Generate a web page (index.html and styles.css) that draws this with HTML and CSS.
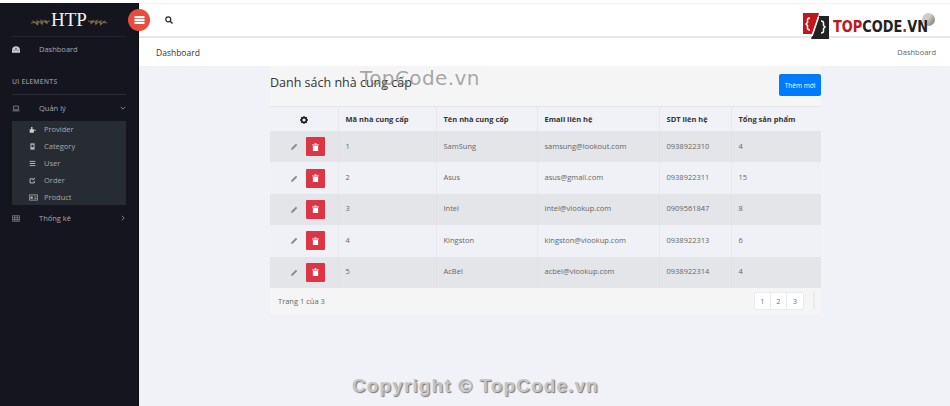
FILE: index.html
```html
<!DOCTYPE html>
<html lang="vi">
<head>
    <meta charset="UTF-8">
    <title>Danh sách nhà cung cấp</title>
    <link rel="stylesheet" href="styles.css">
</head>
<body>
    <div class="wrapper">
        <!-- Sidebar -->
        <aside class="sidebar">
            <div class="brand">
                <svg class="laurel" viewBox="0 0 20 8"><path d="M0 5c6-1 13-1 20-2" stroke="#8a7350" fill="none"/><path d="M3 5L1 2l4 2zM7 4.500L5 1.500l4 2zM11 4L9 1l4 2zM15 3.500L13 1l4 2zM4 5l3 3 1-3zM9 4.500l3 3 1-3.500zM14 4l3 2.500L18 3.500z" fill="#7d6a4a"/></svg>
                <span class="brand-name">HTP</span>
                <svg class="laurel" viewBox="0 0 20 8"><path d="M20 5C14 4 7 4 0 3" stroke="#8a7350" fill="none"/><path d="M17 5l2-3-4 2zM13 4.500l2-3-4 2zM9 4l2-3-4 2zM5 3.500L7 1 3 3zM16 5l-3 3-1-3zM11 4.500l-3 3-1-3.500zM6 4L3 6.500 2 3.500z" fill="#7d6a4a"/></svg>
            </div>
            <a class="nav-item nav-first">
                <svg class="nav-icon" viewBox="0 0 10 8"><path d="M0 8V5C0 2 2 0 5 0s5 2 5 5v3z" fill="#c9ccd1"/><path d="M5 2v3M2 5h1M7 5h1" stroke="#14151f" stroke-width="1"/></svg>
                <span>Dashboard</span>
            </a>
            <div class="nav-label">UI ELEMENTS</div>
            <a class="nav-item nav-open">
                <svg class="nav-icon" viewBox="0 0 10 8"><path d="M2 1h6v4.500H2zM.5 7h9" stroke="#8d9096" fill="none"/></svg>
                <span>Quản lý</span>
                <svg class="nav-arrow" viewBox="0 0 8 8"><path d="M1 2.500l3 3 3-3" stroke="#8d9096" stroke-width="1.200" fill="none"/></svg>
            </a>
            <div class="submenu">
                <a class="sub-item">
                    <svg class="sub-icon" viewBox="0 0 10 9"><path d="M1 9V4h2V1h2v3h2v1h3v1H7v3z" fill="#c9ccd1"/></svg>
                    Provider
                </a>
                <a class="sub-item">
                    <svg class="sub-icon" viewBox="0 0 10 9"><path d="M2 0h6v9H2z" fill="#b4b7bc"/><path d="M3.500 5.500h3V2h-3z" fill="#2a2f36"/></svg>
                    Category
                </a>
                <a class="sub-item">
                    <svg class="sub-icon" viewBox="0 0 10 9"><path d="M1 1.500h8M1 4.500h8M1 7.500h8" stroke="#c9ccd1" stroke-width="1.200"/></svg>
                    User
                </a>
                <a class="sub-item">
                    <svg class="sub-icon" viewBox="0 0 10 9"><path d="M1.500 2h5M1.500 2v6h6V5M5 4l4-3" stroke="#c9ccd1" stroke-width="1.200" fill="none"/></svg>
                    Order
                </a>
                <a class="sub-item">
                    <svg class="sub-icon sub-icon-wide" viewBox="0 0 12 9"><path d="M.5 1h11v7H.5z" stroke="#b4b7bc" fill="none"/><path d="M2 3h3v3H2zM7 3h3v1H7zM7 5h3v1H7z" fill="#b4b7bc"/></svg>
                    Product
                </a>
            </div>
            <a class="nav-item">
                <svg class="nav-icon" viewBox="0 0 10 8"><path d="M.5.500h9v7h-9zM.5 3h9M.5 5.300h9M3.500.500v7M6.500.500v7" stroke="#8d9096" stroke-width=".8" fill="none"/></svg>
                <span>Thống kê</span>
                <svg class="nav-arrow" viewBox="0 0 8 8"><path d="M2.500 1l3 3-3 3" stroke="#8d9096" stroke-width="1.200" fill="none"/></svg>
            </a>
        </aside>

        <div class="main">
            <!-- Thanh trên cùng -->
            <header class="topbar">
                <button class="toggle-btn">
                    <svg viewBox="0 0 10 8" width="11" height="8"><path d="M0 0h10v2.300H0zM0 2.900h10v2.200H0zM0 5.700h10V8H0z" fill="#fff"/></svg>
                </button>
                <svg class="search-icon" viewBox="0 0 8 8"><circle cx="3.300" cy="3.300" r="2.500" stroke="#222" stroke-width="1.200" fill="none"/><path d="M5.200 5.200L7.500 7.500" stroke="#222" stroke-width="1.300"/></svg>
                <div class="logo">
                    <svg class="logo-mark" viewBox="0 0 26 26">
                        <path d="M0 0h16l-6 21H0z" fill="#c0171d"/>
                        <path d="M16 3h10v23H8z" fill="#222"/>
                        <path d="M15.500 4L9 23" stroke="#fff" stroke-width="1.600"/>
                        <path d="M7 5Q4.500 5 4.500 7v2.500L3 11l1.500 1.500V15q0 2 2.500 2" stroke="#fff" stroke-width="1.500" fill="none"/>
                        <path d="M18 8q2.500 0 2.500 2v2.500L22 14l-1.500 1.500V18q0 2-2.500 2" stroke="#fff" stroke-width="1.500" fill="none"/>
                    </svg>
                    <span class="avatar"></span>
                    <span class="logo-text"><span class="logo-red">TOP</span>CODE<span class="logo-red">.</span>VN</span>
                </div>
            </header>

            <div class="breadcrumb-bar">
                <span class="page-name">Dashboard</span>
                <span class="crumb">Dashboard</span>
            </div>

            <div class="content">
                <div class="card">
                    <div class="card-header">
                        <h1>Danh sách nhà cung cấp</h1>
                        <button class="add-btn">Thêm mới</button>
                    </div>
                    <table class="data-table">
                        <thead>
                            <tr>
                                <th class="col-action">
                                    <svg class="gear" viewBox="0 0 10 10"><circle cx="5" cy="5" r="3" stroke="#222" stroke-width="2" fill="none"/><path d="M5 0v2M5 8v2M0 5h2M8 5h2M1.500 1.500l1.500 1.500M7 7l1.500 1.500M8.500 1.500L7 3M3 7L1.500 8.500" stroke="#222" stroke-width="1.600"/></svg>
                                </th>
                                <th class="col-code">Mã nhà cung cấp</th>
                                <th class="col-name">Tên nhà cung cấp</th>
                                <th class="col-mail">Email liên hệ</th>
                                <th class="col-phone">SDT liên hệ</th>
                                <th>Tổng sản phẩm</th>
                            </tr>
                        </thead>
                        <tbody id="rows"></tbody>
                    </table>
                    <div class="card-footer">
                        <span>Trang 1 của 3</span>
                        <div class="pager-wrap">
                            <div class="pager">
                                <a>1</a>
                                <a>2</a>
                                <a>3</a>
                            </div>
                            <span class="pager-end"></span>
                        </div>
                    </div>
                </div>
            </div>
        </div>
    </div>

    <!-- Chữ đóng dấu phủ lên trang -->
    <div class="mark-top">TopCode.vn</div>
    <div class="mark-bottom">Copyright © TopCode.vn</div>

    <script>
        var suppliers = [
            [1, 'SamSung', 'samsung@lookout.com', '0938922310', 4],
            [2, 'Asus', 'asus@gmail.com', '0938922311', 15],
            [3, 'Intel', 'intel@vlookup.com', '0909561847', 8],
            [4, 'Kingston', 'kingston@vlookup.com', '0938922313', 6],
            [5, 'AcBel', 'acbel@vlookup.com', '0938922314', 4]
        ];
        var actions = '<td class="col-action"><div class="actions">' +
            '<svg class="pencil" viewBox="0 0 8 8"><path d="M0 8l.6-2.200L5.600.8l1.600 1.600-5 5z" fill="#8a8a8a"/></svg>' +
            '<button class="del-btn"><svg viewBox="0 0 8 9" width="7" height="8"><path d="M0 1.500h8v1H0zM3 .3h2v1H3zM1 3h6v6H1z" fill="#fff"/></svg></button>' +
            '</div></td>';
        document.getElementById('rows').innerHTML = suppliers.map(function (s) {
            return '<tr>' + actions + s.map(function (v) { return '<td>' + v + '</td>'; }).join('') + '</tr>';
        }).join('');
    </script>
</body>
</html>
```

FILE: styles.css
```css
* {
    box-sizing: border-box;
}
body {
    margin: 0;
    height: 406px;
    overflow: hidden;
    font-family: "Open Sans", Arial, sans-serif;
    font-size: 7.5px;
    color: #666;
    background-color: #fff;
}
a {
    color: inherit;
}
.wrapper {
    display: flex;
    height: 100%;
    padding-top: 3px;
}

/* Sidebar */
.sidebar {
    width: 139px;
    flex-shrink: 0;
    background-color: #14151f;
    border-right: 1px solid #0b0b10;
    color: #a5a8ad;
    padding: 0 12px;
}
.brand {
    height: 34px;
    display: flex;
    align-items: center;
    justify-content: center;
    gap: 1px;
    border-bottom: 1px solid #24252e;
}
.brand-name {
    font-family: "Liberation Serif", serif;
    font-size: 19px;
    color: #f2f2f2;
}
.laurel {
    width: 19px;
    height: 8px;
    margin-top: 4px;
}
.nav-item {
    display: flex;
    align-items: center;
    height: 24px;
}
.nav-item span {
    margin-left: 19px;
}
.nav-icon {
    width: 8px;
    height: 7px;
    flex-shrink: 0;
}
.nav-arrow {
    width: 6px;
    height: 6px;
    margin-left: auto;
}
.nav-label {
    margin-top: 16px;
    padding-bottom: 7px;
    font-size: 6.800px;
    font-weight: 600;
    letter-spacing: .2px;
    color: #8d9096;
    border-bottom: 1px solid #2b2c35;
    line-height: 10px;
}
.nav-open {
    height: 26px;
}
.submenu {
    background-color: #272c33;
    padding: 0 0 0 17px;
    margin-bottom: 1px;
}
.sub-item {
    display: flex;
    align-items: center;
    height: 16.900px;
}
.sub-icon {
    width: 7px;
    height: 7px;
    margin-right: 8px;
}
.sub-icon-wide {
    width: 9px;
    margin-right: 6px;
}

/* Thanh trên cùng */
.main {
    flex: 1;
    min-width: 0;
    display: flex;
    flex-direction: column;
    background-color: #f0f2f8;
}
.topbar {
    height: 35px;
    background: #fff;
    border-top: 1px solid #f0f1f4;
    border-bottom: 2px solid #e6e7ec;
    display: flex;
    align-items: center;
    position: relative;
    padding-left: 26px;
}
.toggle-btn {
    position: absolute;
    left: -11px;
    top: 5px;
    width: 22px;
    height: 22px;
    border-radius: 50%;
    border: none;
    padding: 0;
    background-color: #e74c3c;
    display: flex;
    align-items: center;
    justify-content: center;
}
.search-icon {
    width: 8px;
    height: 8px;
}
.logo {
    margin-left: auto;
    margin-right: 23px;
    display: flex;
    align-items: center;
    position: relative;
    align-self: flex-start;
    margin-top: 9px;
}
.logo-mark {
    width: 26px;
    height: 26px;
}
.logo-text {
    display: inline-block;
    width: 94px;
    white-space: nowrap;
    font-family: "DejaVu Sans Condensed", "DejaVu Sans", sans-serif;
    font-weight: bold;
    font-size: 16.500px;
    color: #222;
    margin-left: 4px;
    position: relative;
    transform: scaleX(.87);
    transform-origin: left center;
}
.logo-red {
    color: #c0171d;
}
.avatar {
    width: 13px;
    height: 13px;
    border-radius: 50%;
    background: linear-gradient(125deg, #cfccc5 45%, #6f6a64);
    position: absolute;
    right: -8px;
    top: 0;
}
.breadcrumb-bar {
    height: 28px;
    background: #fff;
    display: flex;
    align-items: center;
    justify-content: space-between;
    padding: 0 14px 0 17px;
}
.page-name {
    font-size: 8.500px;
    color: #333;
}
.crumb {
    color: #666;
}

/* Conteúdo */
.content {
    padding-left: 131px;
}
.card {
    width: 551px;
    background-color: #f5f5f6;
}
.card-header {
    height: 41px;
    display: flex;
    justify-content: space-between;
    align-items: flex-start;
    padding-top: 7px;
    border-bottom: 1px solid #e4e5e8;
}
.card-header h1 {
    margin: 0;
    font-size: 12.500px;
    font-weight: 400;
    line-height: 19px;
    color: #333;
}
.add-btn {
    width: 42px;
    height: 22px;
    background-color: #007bff;
    color: #fff;
    border: none;
    border-radius: 2px;
    font-family: inherit;
    font-size: 6.500px;
    padding: 0;
    margin-top: 1px;
}
.data-table {
    width: 100%;
    border-collapse: collapse;
    table-layout: fixed;
}
.data-table th {
    height: 24px;
    background-color: #f0f2f8;
    color: #333;
    text-align: left;
    font-size: 7.500px;
    font-weight: 700;
    padding: 0 7px;
    border-right: 1px solid #e6e7ec;
}
.data-table th:last-child,
.data-table td:last-child {
    border-right: none;
}
.data-table td {
    height: 31.400px;
    padding: 0 7px 2px;
    border-right: 1px solid #e0e1e5;
}
.data-table tbody tr:nth-child(odd) td {
    background-color: #e4e5e9;
}
.data-table tbody tr:nth-child(even) td {
    background-color: #eff1f7;
    border-right-color: #e8e9ee;
}
.data-table .col-action {
    width: 68px;
    text-align: center;
    padding: 0;
}
.col-code { width: 98px; }
.col-name { width: 101px; }
.col-mail { width: 122px; }
.col-phone { width: 72px; }
.gear {
    width: 8px;
    height: 8px;
    vertical-align: middle;
}
.actions {
    display: flex;
    align-items: center;
    justify-content: flex-end;
    gap: 8px;
    padding-right: 13px;
}
.pencil {
    width: 7px;
    height: 7px;
}
.del-btn {
    width: 19px;
    height: 19px;
    background-color: #dc3545;
    border: none;
    border-radius: 1px;
    padding: 0;
    display: flex;
    align-items: center;
    justify-content: center;
}
.card-footer {
    height: 26px;
    display: flex;
    align-items: center;
    justify-content: space-between;
    padding: 0 6px 0 8px;
}
.pager-wrap {
    display: flex;
    align-items: center;
    gap: 9px;
}
.pager {
    display: flex;
    background: #fff;
    border-radius: 2px;
    border: 1px solid #e9eaed;
}
.pager a {
    width: 16px;
    height: 16px;
    line-height: 16px;
    text-align: center;
    color: #6c7a86;
    border-right: 1px solid #e9eaed;
}
.pager a:last-child {
    border-right: none;
}
.pager-end {
    width: 2px;
    height: 17px;
    background-color: #eaeaec;
}

/* Chữ đóng dấu */
.mark-top,
.mark-bottom {
    position: absolute;
    white-space: nowrap;
}
.mark-top {
    left: 360px;
    top: 66px;
    font-family: "DejaVu Sans", sans-serif;
    font-size: 20px;
    letter-spacing: .4px;
    color: rgba(130, 130, 130, .7);
}
.mark-bottom {
    left: 352px;
    top: 375px;
    font-family: "Liberation Sans", Arial, sans-serif;
    font-size: 19px;
    font-weight: bold;
    letter-spacing: 1.100px;
    color: #c5c5c8;
    text-shadow: 1px 1px 1px #777;
}
```
